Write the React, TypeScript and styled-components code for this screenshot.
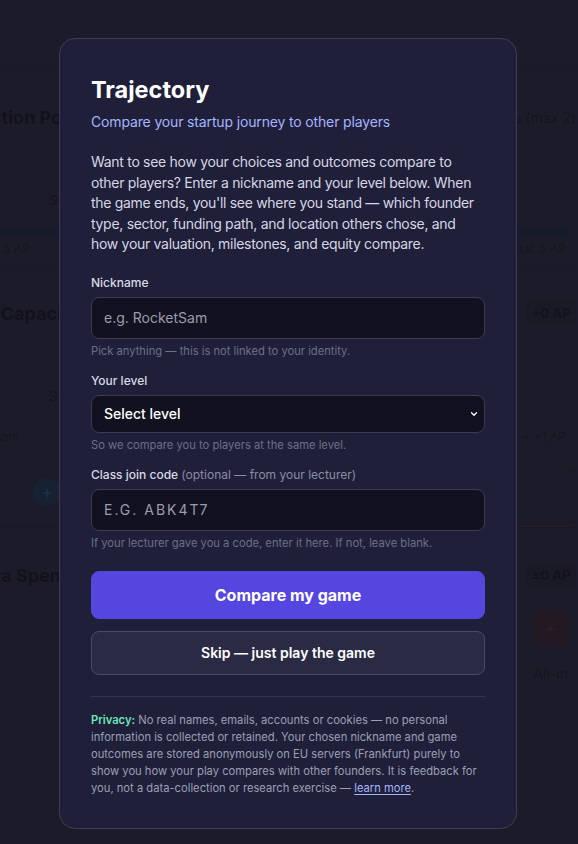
import * as React from 'react'
import styled, { createGlobalStyle } from 'styled-components'

const GlobalStyle = createGlobalStyle`
	html, body {
		margin: 0;
		padding: 0;
		background: #1c1b29;
		font-family: Inter, "Noto Sans", "Liberation Sans", sans-serif;
		-webkit-font-smoothing: antialiased;
	}
	* {
		box-sizing: border-box;
	}
`

/* ---------- dimmed game page behind the dialog ---------- */

const Backdrop = styled.div`
	height: 844px;
	overflow: hidden;
	background: #1c1b29;
	filter: blur(0.6px);
`

const TopBar = styled.div`
	height: 71px;
	border-bottom: 1px solid #191824;
`

const Sheet = styled.div`
	margin-left: -22px;
	padding-right: 2px;
	display: flex;
	flex-direction: column;
`

const Section = styled.section<{ $top: number; $divided?: boolean; $ruled?: boolean }>`
	padding-top: ${(p) => p.$top}px;
	padding-bottom: ${(p) => (p.$divided ? 10 : 0)}px;
	border-bottom: ${(p) => (p.$divided ? '1px solid #191824' : 'none')};
	border-top: ${(p) => (p.$ruled ? '1px solid #191824' : 'none')};
`

const HeadRow = styled.div`
	display: flex;
	align-items: center;
	justify-content: space-between;
	height: 28px;
`

const GhostTitle = styled.h3<{ $shift?: number }>`
	margin: 0 0 0 ${(p) => p.$shift ?? 0}px;
	font-size: 18px;
	font-weight: 700;
	color: #13121c;
`

const GhostNote = styled.span`
	font-size: 14px;
	color: #16151f;
`

const GhostBadge = styled.span`
	width: 50px;
	height: 24px;
	display: flex;
	align-items: center;
	justify-content: center;
	border-radius: 8px;
	background: #1a1926;
	font-size: 13px;
	font-weight: 800;
	color: #14131d;
`

const GhostSmall = styled.div<{ $top: number }>`
	font-size: 13px;
	line-height: 16px;
	color: #15141e;
	padding-left: 71px;
	margin-top: ${(p) => p.$top}px;
`

const GhostBar = styled.div`
	height: 7px;
	margin: 21px 10px 0 0;
	border-radius: 4px;
	background: #141b29;
`

const GhostMeta = styled.div<{ $top: number }>`
	display: flex;
	justify-content: space-between;
	font-size: 12px;
	line-height: 16px;
	color: #17161f;
	margin-top: ${(p) => p.$top}px;
	padding-right: 10px;
`

const GhostRow = styled.div`
	display: flex;
	align-items: flex-start;
	justify-content: space-between;
	height: 58px;
	border-top: 1px solid #191824;
	margin-top: 24px;
	padding: 8px 0 0 55px;
`

const GhostCircle = styled.span`
	width: 28px;
	height: 28px;
	border-radius: 50%;
	background: #162231;
	color: #1d3043;
	display: flex;
	align-items: center;
	justify-content: center;
	font-size: 16px;
	font-weight: 700;
`

const GhostBox = styled.span`
	width: 80px;
	height: 58px;
	margin-top: -9px;
	border: 1px solid #1f1a27;
	border-bottom-color: #2a1a2a;
	border-radius: 8px;
`

const GhostAddCol = styled.div`
	display: flex;
	flex-direction: column;
	align-items: flex-end;
	padding-right: 8px;
	margin-top: 21px;
	gap: 20px;
`

const GhostRedBtn = styled.span`
	width: 35px;
	height: 35px;
	border-radius: 8px;
	background: #221923;
	color: #2b1f2d;
	display: flex;
	align-items: center;
	justify-content: center;
	font-weight: 700;
`

/* ---------- dialog ---------- */

const Overlay = styled.div`
	position: fixed;
	inset: 0;
	display: flex;
	justify-content: center;
	align-items: flex-start;
	padding: 38px 2px 0 0;
`

const Dialog = styled.div`
	width: 458px;
	background: #1f1f3a;
	border: 1px solid #3e3d58;
	border-radius: 16px;
	padding: 36px 31px 31px;
	color: #e5e7eb;
`

const Title = styled.h1`
	margin: 0;
	font-size: 23.5px;
	line-height: 29px;
	font-weight: 700;
	color: #ffffff;
`

const Subtitle = styled.p`
	margin: 8px 0 0;
	font-size: 14px;
	line-height: 20px;
	letter-spacing: -0.15px;
	color: #a5b4fc;
`

const Intro = styled.p`
	margin: 20px 0 0;
	font-size: 14px;
	line-height: 20.5px;
	letter-spacing: -0.3px;
	color: #d6d6e2;
`

const Field = styled.div<{ $first?: boolean }>`
	display: flex;
	flex-direction: column;
	margin-top: ${(p) => (p.$first ? 19 : 13)}px;
`

const Label = styled.label`
	font-size: 12px;
	line-height: 18px;
	font-weight: 500;
	color: #d8d8e4;
	margin-bottom: 5px;
`

const LabelAside = styled.span`
	font-weight: 400;
	color: #8b8ca3;
`

const TextInput = styled.input<{ $code?: boolean }>`
	height: 42px;
	width: 100%;
	padding: 0 12px;
	background: #12111f;
	border: 1px solid #3a3a50;
	border-radius: 8px;
	color: #fff;
	font-family: inherit;
	font-size: 14px;
	letter-spacing: ${(p) => (p.$code ? '2px' : '0')};
	text-transform: ${(p) => (p.$code ? 'uppercase' : 'none')};
	outline: none;

	&::placeholder {
		color: #9b9cad;
		opacity: 1;
	}
`

const SelectWrap = styled.div`
	position: relative;
`

const Select = styled.select`
	appearance: none;
	-webkit-appearance: none;
	height: 38px;
	width: 100%;
	padding: 0 12px;
	background: #12111f;
	border: 1px solid #3a3a50;
	border-radius: 8px;
	color: #ffffff;
	font-family: inherit;
	font-size: 14px;
	font-weight: 500;
	outline: none;
`

const Chevron = styled.svg`
	position: absolute;
	right: 6px;
	top: 14px;
	pointer-events: none;
`

const Hint = styled.p`
	margin: 5px 0 0;
	font-size: 11.2px;
	line-height: 15px;
	color: #6c6f86;
`

const Actions = styled.div`
	display: flex;
	flex-direction: column;
	gap: 12px;
	margin-top: 20px;
`

const Button = styled.button<{ $primary?: boolean }>`
	width: 100%;
	height: ${(p) => (p.$primary ? 48 : 44)}px;
	border-radius: 8px;
	font-family: inherit;
	font-size: ${(p) => (p.$primary ? 16 : 14)}px;
	font-weight: ${(p) => (p.$primary ? 700 : 600)};
	color: #ffffff;
	cursor: pointer;
	background: ${(p) => (p.$primary ? '#5646e0' : '#2a2a45')};
	border: 1px solid ${(p) => (p.$primary ? '#5646e0' : '#4a4a62')};
`

const Divider = styled.hr`
	border: none;
	border-top: 1px solid #34344e;
	margin: 21px 0 0;
`

const Privacy = styled.p`
	margin: 15px 0 0;
	font-size: 11.2px;
	line-height: 17px;
	color: #9c9fb2;
`

const PrivacyTag = styled.strong`
	font-weight: 600;
	color: #6ee7b7;
`

const LearnMore = styled.a`
	color: #a5b4fc;
	text-decoration: underline;
	text-underline-offset: 2px;
`

const GameBehind = () => (
	<Backdrop aria-hidden>
		<TopBar />
		<Sheet>
			<Section $top={32} $divided>
				<HeadRow>
					<GhostTitle>Action Points</GhostTitle>
					<GhostNote>Perks (max 2)</GhostNote>
				</HeadRow>
				<GhostSmall $top={61}>Start</GhostSmall>
				<GhostBar />
				<GhostMeta $top={5}>
					<span>Has 5 AP</span>
					<span>Total: 5 AP</span>
				</GhostMeta>
			</Section>
			<Section $top={31}>
				<HeadRow>
					<GhostTitle>AI Capacity</GhostTitle>
					<GhostBadge>+0 AP</GhostBadge>
				</HeadRow>
				<GhostSmall $top={61}>Staff</GhostSmall>
				<GhostMeta $top={25}>
					<span>Balsam</span>
					<span>Hire → +1 AP</span>
				</GhostMeta>
				<GhostRow>
					<GhostCircle>+</GhostCircle>
					<GhostBox />
				</GhostRow>
			</Section>
			<Section $top={33} $ruled>
				<HeadRow>
					<GhostTitle $shift={-12}>Extra Spend</GhostTitle>
					<GhostBadge>±0 AP</GhostBadge>
				</HeadRow>
				<GhostAddCol>
					<GhostRedBtn>+</GhostRedBtn>
					<GhostNote>All-in</GhostNote>
				</GhostAddCol>
			</Section>
		</Sheet>
	</Backdrop>
)

export default function App() {
	const [nickname, setNickname] = React.useState('')
	const [level, setLevel] = React.useState('')
	const [code, setCode] = React.useState('')

	return (
		<>
			<GlobalStyle />
			<GameBehind />
			<Overlay>
				<Dialog role="dialog" aria-labelledby="traj-title">
					<Title id="traj-title">Trajectory</Title>
					<Subtitle>Compare your startup journey to other players</Subtitle>
					<Intro>
						Want to see how your choices and outcomes compare to other players? Enter a nickname and your
						level below. When the game ends, you'll see where you stand — which founder type, sector, funding
						path, and location others chose, and how your valuation, milestones, and equity compare.
					</Intro>

					<Field $first>
						<Label htmlFor="nick">Nickname</Label>
						<TextInput
							id="nick"
							placeholder="e.g. RocketSam"
							value={nickname}
							onChange={(e) => setNickname(e.target.value)}
						/>
						<Hint>Pick anything — this is not linked to your identity.</Hint>
					</Field>

					<Field>
						<Label htmlFor="level">Your level</Label>
						<SelectWrap>
							<Select id="level" value={level} onChange={(e) => setLevel(e.target.value)}>
								<option value="">Select level</option>
								<option value="ug">Undergraduate</option>
								<option value="pg">Postgraduate</option>
								<option value="exec">Executive</option>
							</Select>
							<Chevron width="10" height="10" viewBox="0 0 10 10" fill="none">
								<path
									d="M2.5 3.8 L5 6.3 L7.5 3.8"
									stroke="#ffffff"
									strokeWidth="1.3"
									strokeLinecap="round"
									strokeLinejoin="round"
								/>
							</Chevron>
						</SelectWrap>
						<Hint>So we compare you to players at the same level.</Hint>
					</Field>

					<Field>
						<Label htmlFor="code">
							Class join code <LabelAside>(optional — from your lecturer)</LabelAside>
						</Label>
						<TextInput
							id="code"
							$code
							placeholder="e.g. ABK4T7"
							value={code}
							onChange={(e) => setCode(e.target.value)}
						/>
						<Hint>If your lecturer gave you a code, enter it here. If not, leave blank.</Hint>
					</Field>

					<Actions>
						<Button $primary>Compare my game</Button>
						<Button>Skip — just play the game</Button>
					</Actions>

					<Divider />

					<Privacy>
						<PrivacyTag>Privacy:</PrivacyTag> No real names, emails, accounts or cookies — no personal
						information is collected or retained. Your chosen nickname and game outcomes are stored
						anonymously on EU servers (Frankfurt) purely to show you how your play compares with other
						founders. It is feedback for you, not a data-collection or research exercise —{' '}
						<LearnMore href="#privacy">learn more</LearnMore>.
					</Privacy>
				</Dialog>
			</Overlay>
		</>
	)
}
